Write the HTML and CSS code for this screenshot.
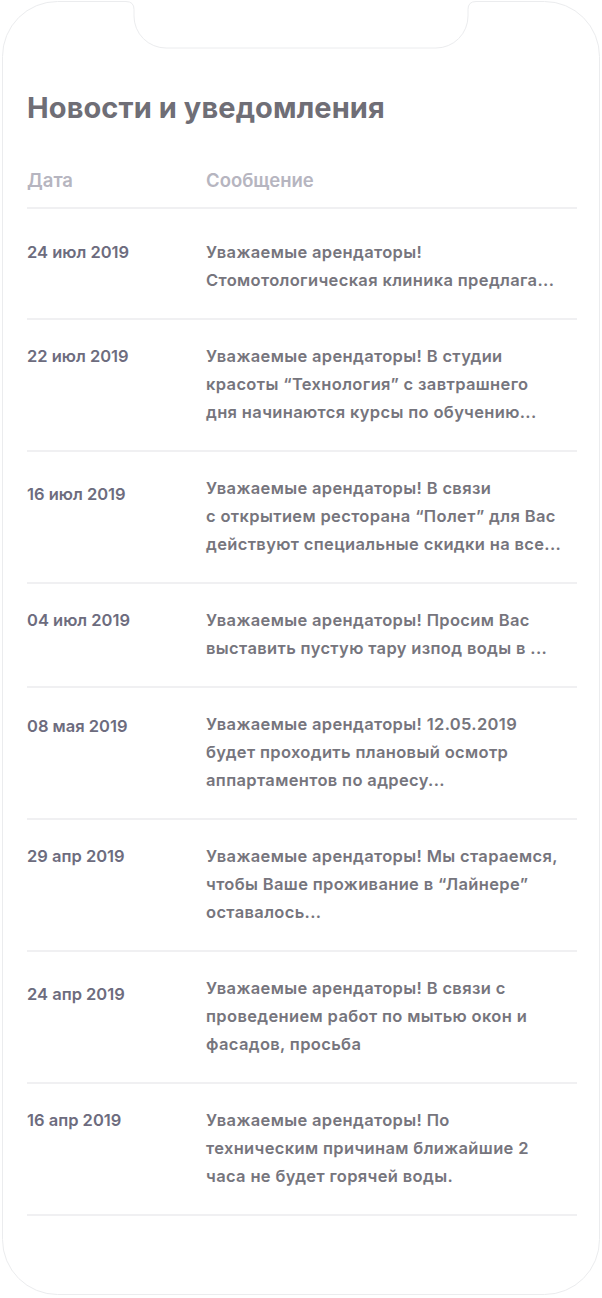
FILE: index.html
```html
<!DOCTYPE html>
<html lang="ru">
<head>
<meta charset="utf-8">
<title>Новости и уведомления</title>
<link rel="stylesheet" href="styles.css">
</head>
<body>
<div class="screen">
  <svg class="frame" width="602" height="1298" viewBox="0 0 602 1298" aria-hidden="true">
    <path d="M57.5 1.5 H126 Q134 1.5 134 9.5 V16 A32 32 0 0 0 166 48 H436 A32 32 0 0 0 468 16 V9.5 Q468 1.5 476 1.5 H544.5 A55 55 0 0 1 599.5 56.5 V1239.5 A55 55 0 0 1 544.5 1294.5 H57.5 A55 55 0 0 1 2.5 1239.5 V56.5 A55 55 0 0 1 57.5 1.5 Z" fill="#fff" stroke="#ebecee" stroke-width="1"/>
  </svg>
  <main class="content">
    <h1 class="title">Новости и уведомления</h1>
    <div class="table">
      <div class="head">
        <div class="col-date">Дата</div>
        <div class="col-msg">Сообщение</div>
      </div>
      <div class="row row--first">
        <div class="date">24 июл 2019</div>
        <div class="msg">Уважаемые арендаторы!<br>Стомотологическая клиника предлага...</div>
      </div>
      <div class="row">
        <div class="date">22 июл 2019</div>
        <div class="msg">Уважаемые арендаторы! В студии<br>красоты “Технология” с завтрашнего<br>дня начинаются курсы по обучению...</div>
      </div>
      <div class="row">
        <div class="date date--low">16 июл 2019</div>
        <div class="msg">Уважаемые арендаторы! В связи<br>с открытием ресторана “Полет” для Вас<br>действуют специальные скидки на все...</div>
      </div>
      <div class="row">
        <div class="date">04 июл 2019</div>
        <div class="msg">Уважаемые арендаторы! Просим Вас<br>выставить пустую тару изпод воды в ...</div>
      </div>
      <div class="row">
        <div class="date date--low-sm">08 мая 2019</div>
        <div class="msg">Уважаемые арендаторы! 12.05.2019<br>будет проходить плановый осмотр<br>аппартаментов по адресу...</div>
      </div>
      <div class="row">
        <div class="date">29 апр 2019</div>
        <div class="msg">Уважаемые арендаторы! Мы стараемся,<br>чтобы Ваше проживание в “Лайнере”<br>оставалось...</div>
      </div>
      <div class="row">
        <div class="date date--low">24 апр 2019</div>
        <div class="msg">Уважаемые арендаторы! В связи с<br>проведением работ по мытью окон и<br>фасадов, просьба</div>
      </div>
      <div class="row">
        <div class="date">16 апр 2019</div>
        <div class="msg">Уважаемые арендаторы! По<br>техническим причинам ближайшие 2<br>часа не будет горячей воды.</div>
      </div>
    </div>
  </main>
</div>
</body>
</html>
```
FILE: styles.css
```css
* { box-sizing: border-box; }
html, body { margin: 0; padding: 0; background: #fff; }
body { font-family: Inter, "Noto Sans", "Liberation Sans", sans-serif; }

.screen {
  position: relative;
  width: 602px;
  height: 1298px;
  overflow: hidden;
}

.frame {
  position: absolute;
  left: 0;
  top: 0;
}

.content {
  position: relative;
  padding: 90px 25px 0 27px;
}

.title {
  margin: 0;
  font-size: 29px;
  line-height: 36px;
  font-weight: 700;
  color: #6f6e76;
  letter-spacing: 0.1px;
}

.table {
  margin-top: 42px;
}

.head {
  display: flex;
  padding-bottom: 15px;
  border-bottom: 2px solid #f0f0f2;
  font-size: 18.5px;
  line-height: 24px;
  font-weight: 600;
  color: #b6b5c0;
}

.col-date, .date {
  width: 179px;
  flex: none;
}

.row {
  display: flex;
  align-items: flex-start;
  padding: 22px 0 24px;
  border-bottom: 2px solid #f0f0f2;
  font-size: 16.5px;
  line-height: 28px;
  font-weight: 600;
}

.row--first {
  padding-top: 29px;
}

.date {
  color: #6d6c7e;
}

.date--low {
  padding-top: 6px;
}

.date--low-sm {
  padding-top: 2px;
}

.msg {
  color: #76757d;
  white-space: nowrap;
  letter-spacing: 0.35px;
}
```
